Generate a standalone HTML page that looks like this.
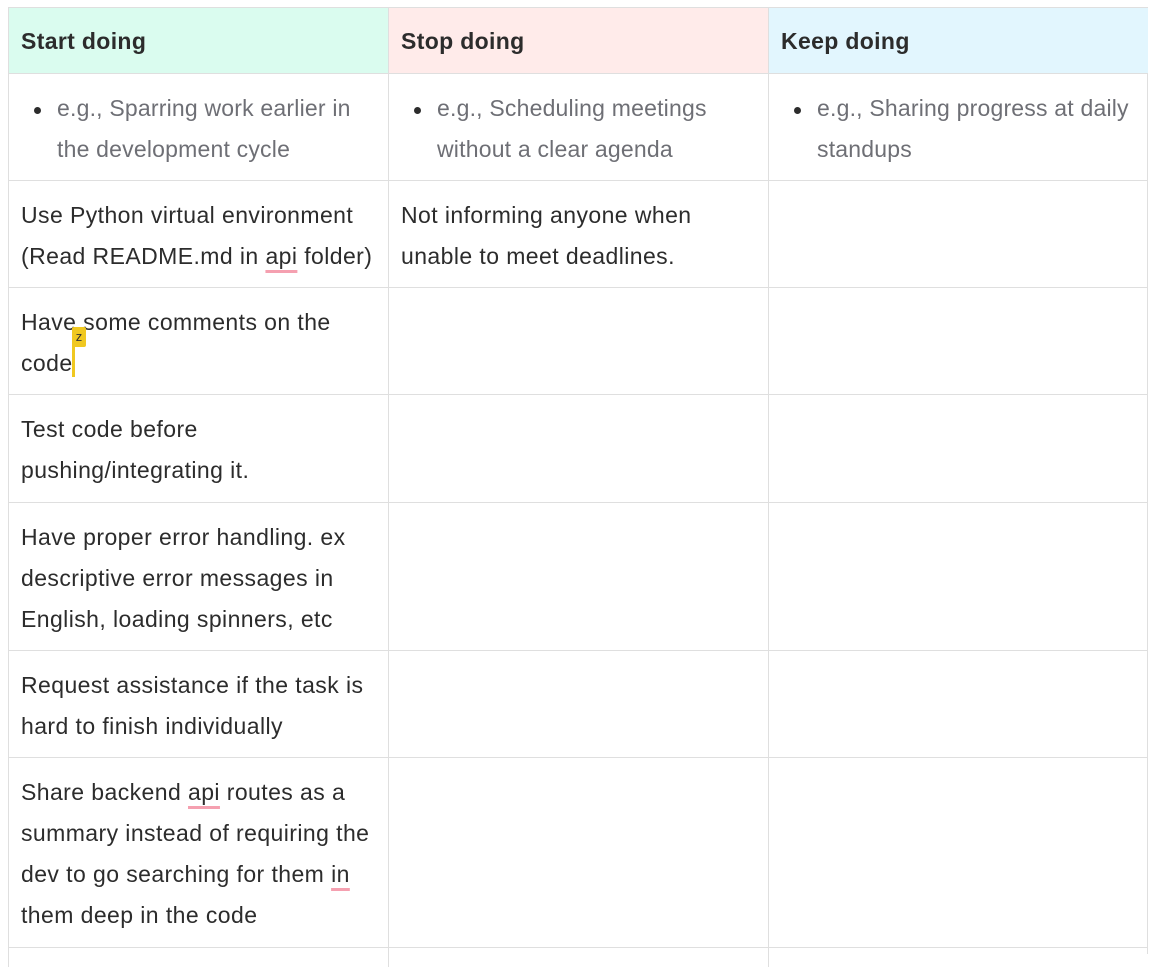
<!DOCTYPE html>
<html><head><style>
body{margin:0;width:1152px;height:954px;background:#fff;position:relative;overflow:hidden;font-family:"Liberation Sans",sans-serif;color:#2c2c2c}
.c{position:absolute;box-sizing:border-box;border-left:1px solid #dfdfdf;border-top:1px solid #dfdfdf;padding:14px 12px 0 12px;font-size:23px;line-height:41px;white-space:nowrap;letter-spacing:0.42px}
.h{font-weight:bold;padding-top:13px;letter-spacing:0.35px}
.g{color:#6e6f75;padding-left:48px;letter-spacing:0.2px}
.g:before{content:"";position:absolute;left:25px;top:33px;width:7px;height:7px;border-radius:50%;background:#2c2c2c}
.u{text-decoration:underline;text-decoration-color:#f5a0b0;text-decoration-thickness:3px;text-underline-offset:6px}
</style></head><body>
<div style="position:absolute;left:1147px;top:7px;width:1px;height:947px;background:#dfdfdf"></div>
<div class="c h" style="left:8px;top:7px;width:380px;height:66px;background:#dafcef">Start doing</div>
<div class="c h" style="left:388px;top:7px;width:380px;height:66px;background:#ffebea">Stop doing</div>
<div class="c h" style="left:768px;top:7px;width:380px;height:66px;background:#e2f6fe">Keep doing</div>
<div class="c g" style="left:8px;top:73px;width:380px;height:107px">e.g., Sparring work earlier in<br>the development cycle</div>
<div class="c g" style="left:388px;top:73px;width:380px;height:107px">e.g., Scheduling meetings<br>without a clear agenda</div>
<div class="c g" style="left:768px;top:73px;width:380px;height:107px">e.g., Sharing progress at daily<br>standups</div>
<div class="c" style="left:8px;top:180px;width:380px;height:107px">Use Python virtual environment<br>(Read README.md in <span class="u">api</span> folder)</div>
<div class="c" style="left:388px;top:180px;width:380px;height:107px">Not informing anyone when<br>unable to meet deadlines.</div>
<div class="c" style="left:768px;top:180px;width:380px;height:107px"></div>
<div class="c" style="left:8px;top:287px;width:380px;height:107px">Have some comments on the<br>code</div>
<div class="c" style="left:388px;top:287px;width:380px;height:107px"></div>
<div class="c" style="left:768px;top:287px;width:380px;height:107px"></div>
<div style="position:absolute;left:72px;top:327px;width:14px;height:20px;background:#f0c820;border-radius:2px;font-size:13px;line-height:20px;text-align:center;color:#333">z</div>
<div style="position:absolute;left:72px;top:340px;width:3px;height:37px;background:#f0c820"></div>
<div class="c" style="left:8px;top:394px;width:380px;height:108px">Test code before<br>pushing/integrating it.</div>
<div class="c" style="left:388px;top:394px;width:380px;height:108px"></div>
<div class="c" style="left:768px;top:394px;width:380px;height:108px"></div>
<div class="c" style="left:8px;top:502px;width:380px;height:148px">Have proper error handling. ex<br>descriptive error messages in<br>English, loading spinners, etc</div>
<div class="c" style="left:388px;top:502px;width:380px;height:148px"></div>
<div class="c" style="left:768px;top:502px;width:380px;height:148px"></div>
<div class="c" style="left:8px;top:650px;width:380px;height:107px">Request assistance if the task is<br>hard to finish individually</div>
<div class="c" style="left:388px;top:650px;width:380px;height:107px"></div>
<div class="c" style="left:768px;top:650px;width:380px;height:107px"></div>
<div class="c" style="left:8px;top:757px;width:380px;height:190px">Share backend <span class="u">api</span> routes as a<br>summary instead of requiring the<br>dev to go searching for them <span class="u">in</span><br>them deep in the code</div>
<div class="c" style="left:388px;top:757px;width:380px;height:190px"></div>
<div class="c" style="left:768px;top:757px;width:380px;height:190px"></div>
<div class="c" style="left:8px;top:947px;width:380px;height:20px"></div>
<div class="c" style="left:388px;top:947px;width:380px;height:20px"></div>
<div class="c" style="left:768px;top:947px;width:380px;height:20px"></div>
</body></html>
